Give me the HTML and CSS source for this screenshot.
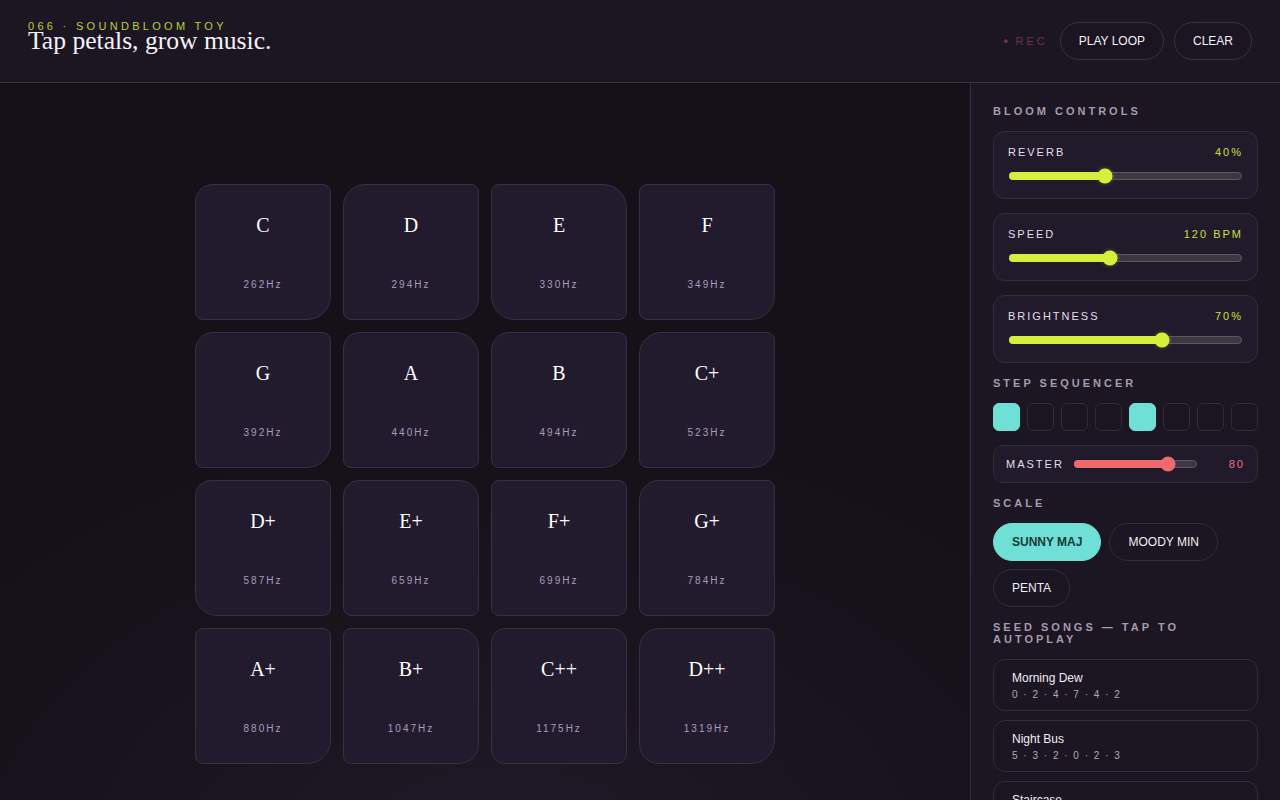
FILE: index.html
```html
<!DOCTYPE html>
<html lang="en">
<head>
    <meta charset="UTF-8">
    <meta name="viewport" content="width=device-width, initial-scale=1.0">
    <title>Soundbloom Toy</title>
    <link rel="stylesheet" href="styles.css">
</head>
<body>
    <header class="topbar">
        <div class="brand">
            <div class="kicker">066 · Soundbloom Toy</div>
            <h1 class="title">Tap petals, grow music.</h1>
        </div>
        <div class="actions">
            <span class="rec"><span class="rec-dot">●</span>REC</span>
            <button class="pill-btn">PLAY LOOP</button>
            <button class="pill-btn">CLEAR</button>
        </div>
    </header>

    <main class="layout">
        <section class="stage">
            <div class="pad-grid">
                <button class="petal shape-a"><span class="note">C</span><span class="hz">262Hz</span></button>
                <button class="petal shape-b"><span class="note">D</span><span class="hz">294Hz</span></button>
                <button class="petal shape-c"><span class="note">E</span><span class="hz">330Hz</span></button>
                <button class="petal shape-d"><span class="note">F</span><span class="hz">349Hz</span></button>

                <button class="petal shape-a"><span class="note">G</span><span class="hz">392Hz</span></button>
                <button class="petal shape-e"><span class="note">A</span><span class="hz">440Hz</span></button>
                <button class="petal shape-a"><span class="note">B</span><span class="hz">494Hz</span></button>
                <button class="petal shape-b"><span class="note">C+</span><span class="hz">523Hz</span></button>

                <button class="petal shape-f"><span class="note">D+</span><span class="hz">587Hz</span></button>
                <button class="petal shape-g"><span class="note">E+</span><span class="hz">659Hz</span></button>
                <button class="petal shape-h"><span class="note">F+</span><span class="hz">699Hz</span></button>
                <button class="petal shape-i"><span class="note">G+</span><span class="hz">784Hz</span></button>

                <button class="petal shape-d"><span class="note">A+</span><span class="hz">880Hz</span></button>
                <button class="petal shape-j"><span class="note">B+</span><span class="hz">1047Hz</span></button>
                <button class="petal shape-k"><span class="note">C++</span><span class="hz">1175Hz</span></button>
                <button class="petal shape-l"><span class="note">D++</span><span class="hz">1319Hz</span></button>
            </div>
        </section>

        <aside class="panel">
            <h2 class="section-label">Bloom Controls</h2>

            <div class="control-card">
                <div class="control-head">
                    <span class="control-name">REVERB</span>
                    <span class="control-value">40%</span>
                </div>
                <div class="slider">
                    <div class="slider-fill" style="width: 41%"></div>
                    <span class="slider-thumb" style="left: 41%"></span>
                </div>
            </div>

            <div class="control-card">
                <div class="control-head">
                    <span class="control-name">SPEED</span>
                    <span class="control-value">120 BPM</span>
                </div>
                <div class="slider">
                    <div class="slider-fill" style="width: 43.5%"></div>
                    <span class="slider-thumb" style="left: 43.5%"></span>
                </div>
            </div>

            <div class="control-card">
                <div class="control-head">
                    <span class="control-name">BRIGHTNESS</span>
                    <span class="control-value">70%</span>
                </div>
                <div class="slider">
                    <div class="slider-fill" style="width: 66%"></div>
                    <span class="slider-thumb" style="left: 66%"></span>
                </div>
            </div>

            <h2 class="section-label">Step Sequencer</h2>
            <div class="steps">
                <span class="step on"></span>
                <span class="step"></span>
                <span class="step"></span>
                <span class="step"></span>
                <span class="step on"></span>
                <span class="step"></span>
                <span class="step"></span>
                <span class="step"></span>
            </div>

            <div class="master-card">
                <span class="control-name">MASTER</span>
                <div class="slider slider-red">
                    <div class="slider-fill" style="width: 76.5%"></div>
                    <span class="slider-thumb" style="left: 76.5%"></span>
                </div>
                <span class="master-value">80</span>
            </div>

            <h2 class="section-label">Scale</h2>
            <div class="chips">
                <button class="chip active">SUNNY MAJ</button>
                <button class="chip">MOODY MIN</button>
                <button class="chip">PENTA</button>
            </div>

            <h2 class="section-label tight">Seed Songs — Tap to Autoplay</h2>
            <div class="song">
                <div class="song-name">Morning Dew</div>
                <div class="song-seq">0 · 2 · 4 · 7 · 4 · 2</div>
            </div>
            <div class="song">
                <div class="song-name">Night Bus</div>
                <div class="song-seq">5 · 3 · 2 · 0 · 2 · 3</div>
            </div>
            <div class="song">
                <div class="song-name">Staircase</div>
                <div class="song-seq">0 · 1 · 2 · 3 · 4 · 5</div>
            </div>
        </aside>
    </main>
</body>
</html>
```

FILE: styles.css
```css
* {
    box-sizing: border-box;
}
body {
    margin: 0;
    height: 100vh;
    overflow: hidden;
    background: #141118;
    color: #f2eef6;
    font-family: "Liberation Sans", Arial, sans-serif;
}
button {
    font-family: inherit;
    cursor: pointer;
}

/* top bar */
.topbar {
    height: 83px;
    padding: 20px 28px 0;
    display: flex;
    justify-content: space-between;
    align-items: flex-start;
    background: #1c1623;
    border-bottom: 1px solid #38323f;
}
.kicker {
    font-size: 11px;
    line-height: 12px;
    letter-spacing: 3.3px;
    text-transform: uppercase;
    color: #b8d03c;
}
.title {
    margin: -4px 0 0;
    font-family: "Liberation Serif", "Times New Roman", serif;
    font-weight: normal;
    font-size: 25.6px;
    line-height: 26px;
    color: #f6f3f8;
}
.actions {
    margin-top: 2px;
    display: flex;
    align-items: center;
    gap: 10px;
}
.rec {
    margin-right: 2px;
    font-size: 11px;
    letter-spacing: 3px;
    color: #70343f;
}
.rec-dot {
    font-size: 9px;
    margin-right: 7px;
    vertical-align: 1px;
    letter-spacing: 0;
}
.pill-btn {
    height: 38px;
    padding: 0 18px;
    border: 1px solid #3a3342;
    border-radius: 19px;
    background: #1a1520;
    color: #f4f1f7;
    font-size: 12px;
}

/* main area */
.layout {
    display: grid;
    grid-template-columns: 1fr 310px;
    height: calc(100vh - 83px);
}
.stage {
    padding-top: 101px;
    display: flex;
    justify-content: center;
    align-items: flex-start;
    background: radial-gradient(ellipse 70% 60% at 52% 105%, #221b2b 0%, #1a1520 45%, #141118 100%);
}
.pad-grid {
    display: grid;
    grid-template-columns: repeat(4, 136px);
    grid-auto-rows: 136px;
    gap: 12px;
}
.petal {
    display: flex;
    flex-direction: column;
    justify-content: space-between;
    align-items: center;
    padding: 28px 0 27px;
    background: #221b2e;
    border: 1px solid #382f45;
    border-radius: 8px;
    color: #fff;
}
.note {
    font-family: "Liberation Serif", "Times New Roman", serif;
    font-size: 20px;
    line-height: 24px;
}
.hz {
    font-size: 10px;
    line-height: 14px;
    letter-spacing: 2px;
    color: #a99dba;
}

/* petal corner shapes */
.shape-a { border-radius: 18px 8px 24px 8px; }
.shape-b { border-radius: 22px 8px 22px 8px; }
.shape-c { border-radius: 8px 24px 8px 24px; }
.shape-d { border-radius: 8px 8px 24px 8px; }
.shape-e { border-radius: 16px 24px 8px 8px; }
.shape-f { border-radius: 16px 8px 8px 22px; }
.shape-g { border-radius: 16px 20px 8px 8px; }
.shape-h { border-radius: 8px 8px 10px 8px; }
.shape-i { border-radius: 20px 8px 10px 8px; }
.shape-j { border-radius: 8px 20px 20px 8px; }
.shape-k { border-radius: 14px 14px 10px 14px; }
.shape-l { border-radius: 20px 10px 24px 20px; }

/* side panel */
.panel {
    padding: 21px 22px 0 22px;
    background: #1b1621;
    border-left: 1px solid #36303d;
}
.section-label {
    margin: 0 0 13px;
    font-size: 11px;
    line-height: 14px;
    font-weight: bold;
    letter-spacing: 3px;
    text-transform: uppercase;
    color: #a69bb0;
}
.section-label.tight {
    line-height: 12px;
    margin-top: 14px;
    margin-bottom: 14px;
}
.control-card {
    height: 68px;
    margin-bottom: 14px;
    padding: 13px 14px 0;
    background: #211a2b;
    border: 1px solid #352d40;
    border-radius: 12px;
}
.control-card:nth-of-type(3) {
    margin-bottom: 13px;
}
.control-head {
    display: flex;
    justify-content: space-between;
    font-size: 11px;
    line-height: 14px;
    letter-spacing: 2px;
}
.control-name {
    font-size: 11px;
    letter-spacing: 2px;
    color: #e4dfea;
}
.control-value {
    color: #c6e03c;
}
.slider {
    position: relative;
    height: 8px;
    margin: 13px 1px 0;
    background: #3c3842;
    border: 1px solid #5b5662;
    border-radius: 4px;
}
.slider-fill {
    margin: -1px 0 0 -1px;
    height: 8px;
    background: #d5f03b;
    border-radius: 4px 0 0 4px;
}
.slider-thumb {
    position: absolute;
    top: 50%;
    width: 15px;
    height: 15px;
    border-radius: 50%;
    background: #d5f03b;
    transform: translate(-50%, -50%);
    box-shadow: 0 0 4px rgba(213, 240, 59, 0.35);
}
.slider-red {
    flex: 1;
    margin: 0;
}
.slider-red .slider-fill,
.slider-red .slider-thumb {
    background: #ef6a6c;
    box-shadow: none;
}

.steps {
    display: grid;
    grid-template-columns: repeat(8, 1fr);
    gap: 7px;
    margin-bottom: 14px;
}
.step {
    height: 28px;
    border: 1px solid #342c3c;
    border-radius: 6px;
    background: #1a1520;
}
.step.on {
    background: #6ee0d5;
    border-color: #6ee0d5;
}

.master-card {
    height: 38px;
    margin-bottom: 13px;
    padding: 0 12px;
    display: flex;
    align-items: center;
    gap: 10px;
    background: #211a2b;
    border: 1px solid #352d40;
    border-radius: 10px;
}
.master-value {
    width: 38px;
    text-align: right;
    font-size: 11px;
    letter-spacing: 2px;
    color: #ef6e76;
}

.chips {
    display: flex;
    flex-wrap: wrap;
    gap: 8px;
}
.chip {
    height: 38px;
    padding: 0 18px;
    border: 1px solid #352d3e;
    border-radius: 19px;
    background: #1b1621;
    color: #f1edf5;
    font-size: 12px;
}
.chip.active {
    background: #6ee0d5;
    border-color: #6ee0d5;
    color: #153a36;
    font-weight: bold;
}

.song {
    height: 52px;
    margin-bottom: 9px;
    padding: 10px 18px 0;
    border: 1px solid #352d3e;
    border-radius: 12px;
}
.song-name {
    font-size: 12px;
    line-height: 16px;
    color: #f1edf5;
}
.song-seq {
    margin-top: 2px;
    font-size: 10px;
    line-height: 14px;
    letter-spacing: 1.5px;
    color: #b3aabb;
}
```
